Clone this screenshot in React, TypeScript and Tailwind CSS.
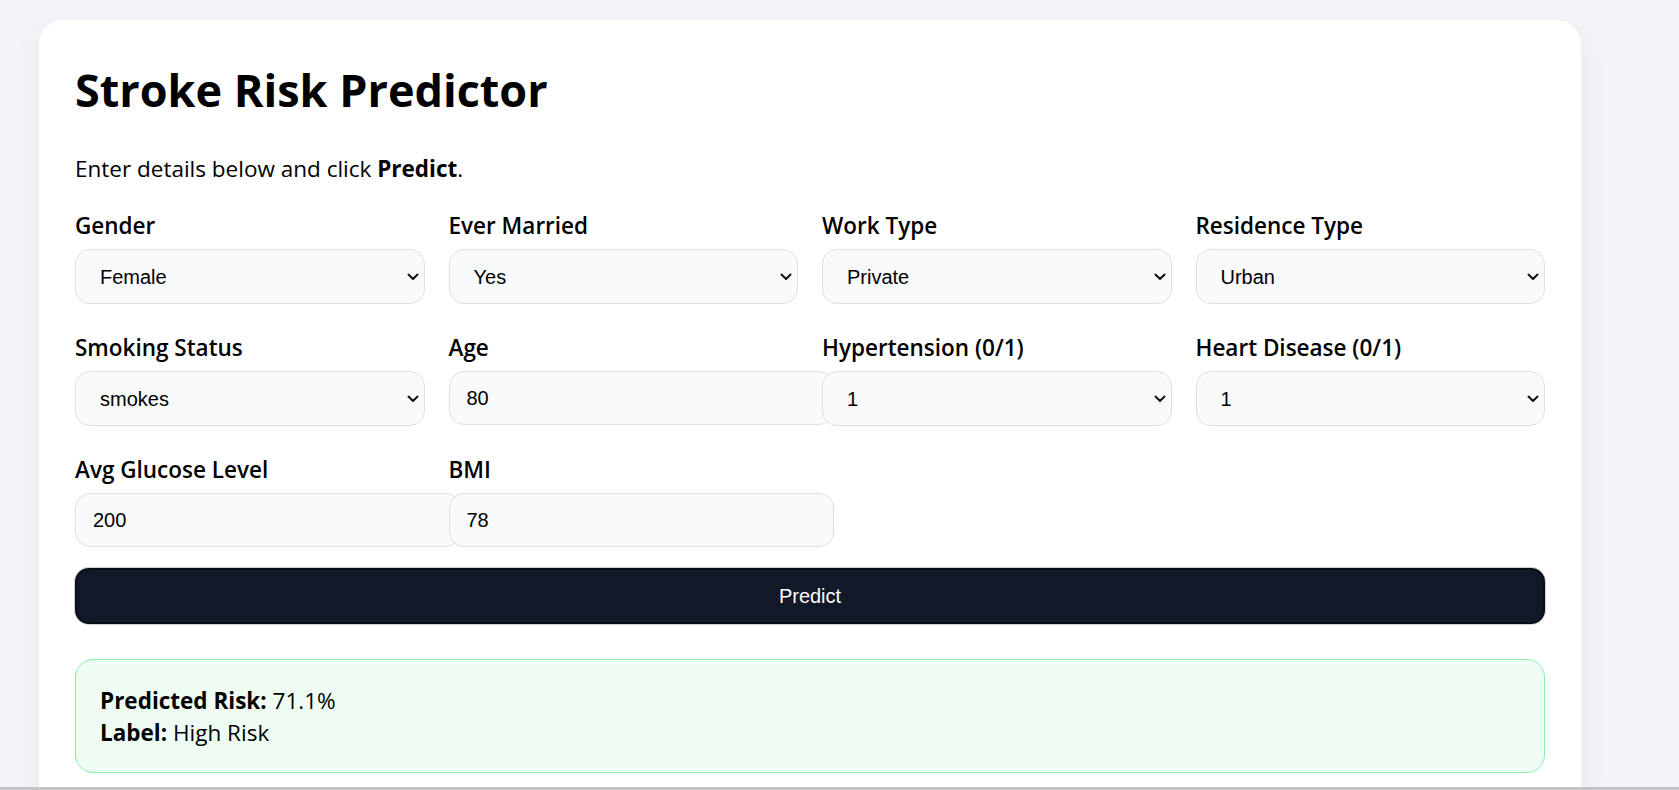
import React, { useState } from 'react';

type Field =
  | { kind: 'select'; label: string; value: string; options: string[] }
  | { kind: 'input'; label: string; value: string };

const fields: Field[] = [
  { kind: 'select', label: 'Gender', value: 'Female', options: ['Female', 'Male', 'Other'] },
  { kind: 'select', label: 'Ever Married', value: 'Yes', options: ['Yes', 'No'] },
  { kind: 'select', label: 'Work Type', value: 'Private', options: ['Private', 'Self-employed', 'Govt_job', 'children', 'Never_worked'] },
  { kind: 'select', label: 'Residence Type', value: 'Urban', options: ['Urban', 'Rural'] },
  { kind: 'select', label: 'Smoking Status', value: 'smokes', options: ['never smoked', 'formerly smoked', 'smokes', 'Unknown'] },
  { kind: 'input', label: 'Age', value: '80' },
  { kind: 'select', label: 'Hypertension (0/1)', value: '1', options: ['0', '1'] },
  { kind: 'select', label: 'Heart Disease (0/1)', value: '1', options: ['0', '1'] },
  { kind: 'input', label: 'Avg Glucose Level', value: '200' },
  { kind: 'input', label: 'BMI', value: '78' },
];

function Chevron() {
  return (
    <svg width="12" height="8" viewBox="0 0 12 8" fill="none" className="pointer-events-none absolute right-[6px] top-1/2 -translate-y-1/2">
      <path d="M1.5 1.5L6 6L10.5 1.5" stroke="#111" strokeWidth="2" strokeLinecap="round" strokeLinejoin="round" />
    </svg>
  );
}

export default function App() {
  const [values, setValues] = useState<Record<string, string>>(
    Object.fromEntries(fields.map((f) => [f.label, f.value]))
  );

  const set = (k: string, v: string) => setValues({ ...values, [k]: v });

  return (
    <div className="min-h-screen bg-[#f4f5f9] pt-[20px] pb-[40px] pl-[39px]">
      <div className="w-[1542px] rounded-[24px] bg-white p-[36px] text-[22.5px] leading-[32px] text-black shadow-[0_8px_30px_rgba(17,24,39,0.06)] font-['Open_Sans','Noto_Sans',sans-serif]">
        <h1 className="pt-[4px] text-[45px] font-bold leading-[60px]">Stroke Risk Predictor</h1>
        <p className="mt-[33px]">
          Enter details below and click <b className="font-bold">Predict</b>.
        </p>

        <div className="mt-[23px] grid grid-cols-4 gap-x-[24px] gap-y-[26px]">
          {fields.map((f) => (
            <div key={f.label} className="flex flex-col">
              <label className="mb-[7px] pt-[2px] font-semibold">{f.label}</label>
              {f.kind === 'select' ? (
                <div className="relative">
                  <select
                    value={values[f.label]}
                    onChange={(e) => set(f.label, e.target.value)}
                    className="h-[55px] w-full appearance-none rounded-[15px] border border-[#dcdfe5] bg-[#f8fafc] pl-[24px] pr-[30px] text-[20px] text-black outline-none font-['Liberation_Sans',Arial,sans-serif]"
                  >
                    {f.options.map((o) => (
                      <option key={o}>{o}</option>
                    ))}
                  </select>
                  <Chevron />
                </div>
              ) : (
                <input
                  type="number"
                  value={values[f.label]}
                  onChange={(e) => set(f.label, e.target.value)}
                  className="box-content h-[24px] w-full rounded-[15px] border border-[#dcdfe5] bg-[#f8fafc] px-[17px] py-[14px] text-[20px] text-black outline-none font-['Liberation_Sans',Arial,sans-serif] [appearance:textfield] [&::-webkit-inner-spin-button]:appearance-none"
                />
              )}
            </div>
          ))}
        </div>

        <button className="mt-[21px] h-[56px] w-full rounded-[14px] border-2 border-[#0a0d14] bg-[#111827] text-[20px] text-white shadow-[0_0_0_1px_rgba(0,0,0,0.18)] font-['Liberation_Sans',Arial,sans-serif]">
          Predict
        </button>

        <div className="mt-[35px] rounded-[18px] border border-[#86efac] bg-[#effcf3] px-[24px] pt-[25px] pb-[23px]">
          <div>
            <b className="font-bold">Predicted Risk:</b> 71.1%
          </div>
          <div>
            <b className="font-bold">Label:</b> High Risk
          </div>
        </div>
      </div>

      <div className="fixed bottom-0 left-0 right-0 h-[3px] bg-[#c4c4c4]" />
    </div>
  );
}
